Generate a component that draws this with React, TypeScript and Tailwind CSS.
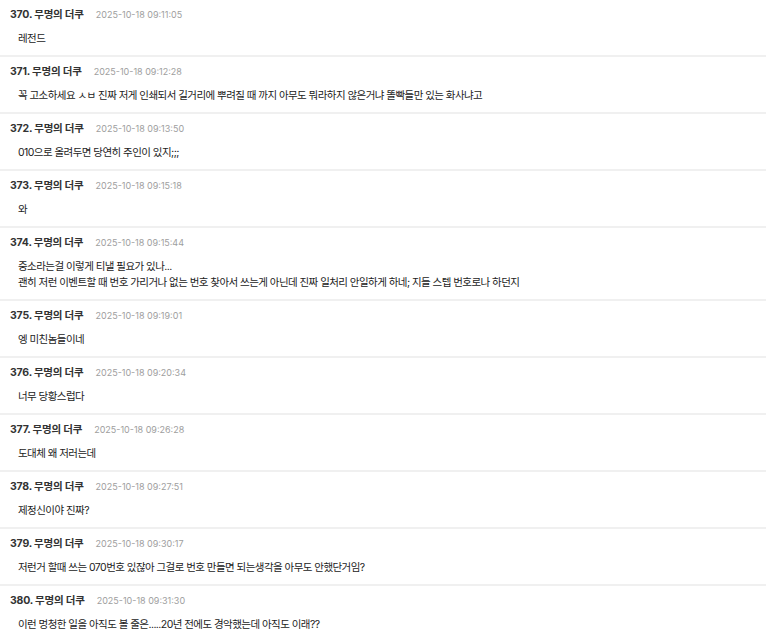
const comments = [
	{ no: 370, time: '2025-10-18 09:11:05', lines: ['레전드'] },
	{
		no: 371,
		time: '2025-10-18 09:12:28',
		lines: ['꼭 고소하세요 ㅅㅂ 진짜 저게 인쇄되서 길거리에 뿌려질 때 까지 아무도 뭐라하지 않은거냐 똘빡들만 있는 화사냐고'],
	},
	{ no: 372, time: '2025-10-18 09:13:50', lines: ['010으로 올려두면 당연히 주인이 있지;;;'] },
	{ no: 373, time: '2025-10-18 09:15:18', lines: ['와'] },
	{
		no: 374,
		time: '2025-10-18 09:15:44',
		lines: [
			'중소라는걸 이렇게 티낼 필요가 있나...',
			'괜히 저런 이벤트할 때 번호 가리거나 없는 번호 찾아서 쓰는게 아닌데 진짜 일처리 안일하게 하네; 지들 스텝 번호로나 하던지',
		],
	},
	{ no: 375, time: '2025-10-18 09:19:01', lines: ['엥 미친놈들이네'] },
	{ no: 376, time: '2025-10-18 09:20:34', lines: ['너무 당황스럽다'] },
	{ no: 377, time: '2025-10-18 09:26:28', lines: ['도대체 왜 저러는데'] },
	{ no: 378, time: '2025-10-18 09:27:51', lines: ['제정신이야 진짜?'] },
	{
		no: 379,
		time: '2025-10-18 09:30:17',
		lines: ['저런거 할때 쓰는 070번호 있잖아 그걸로 번호 만들면 되는생각을 아무도 안했단거임?'],
	},
	{ no: 380, time: '2025-10-18 09:31:30', lines: ['이런 멍청한 일을 아직도 볼 줄은.....20년 전에도 경악했는데 아직도 이래??'] },
]

const App = () => {
	return (
		<div className="w-[766px] h-[640px] overflow-hidden bg-white font-['Inter','Noto_Sans_CJK_KR',sans-serif]">
			{comments.map((c) => (
				<div key={c.no} className="border-b-2 border-[#f0f0f0] pl-[10px] pr-4 pt-[8px] pb-[8px]">
					<div className="flex items-center h-[14px]">
						<span className="text-[10.5px] font-bold text-[#333] leading-[14px] tracking-[-0.2px]">
							{c.no}. 무명의 더쿠
						</span>
						<span className="ml-[12px] text-[9px] text-[#9e9e9e] leading-[14px]">{c.time}</span>
					</div>
					<div className="mt-[9px] pl-[8px] text-[10.5px] leading-[16px] text-[#222] tracking-[-0.55px]">
						{c.lines.map((l, i) => (
							<div key={i}>{l}</div>
						))}
					</div>
				</div>
			))}
		</div>
	)
}

export default App
